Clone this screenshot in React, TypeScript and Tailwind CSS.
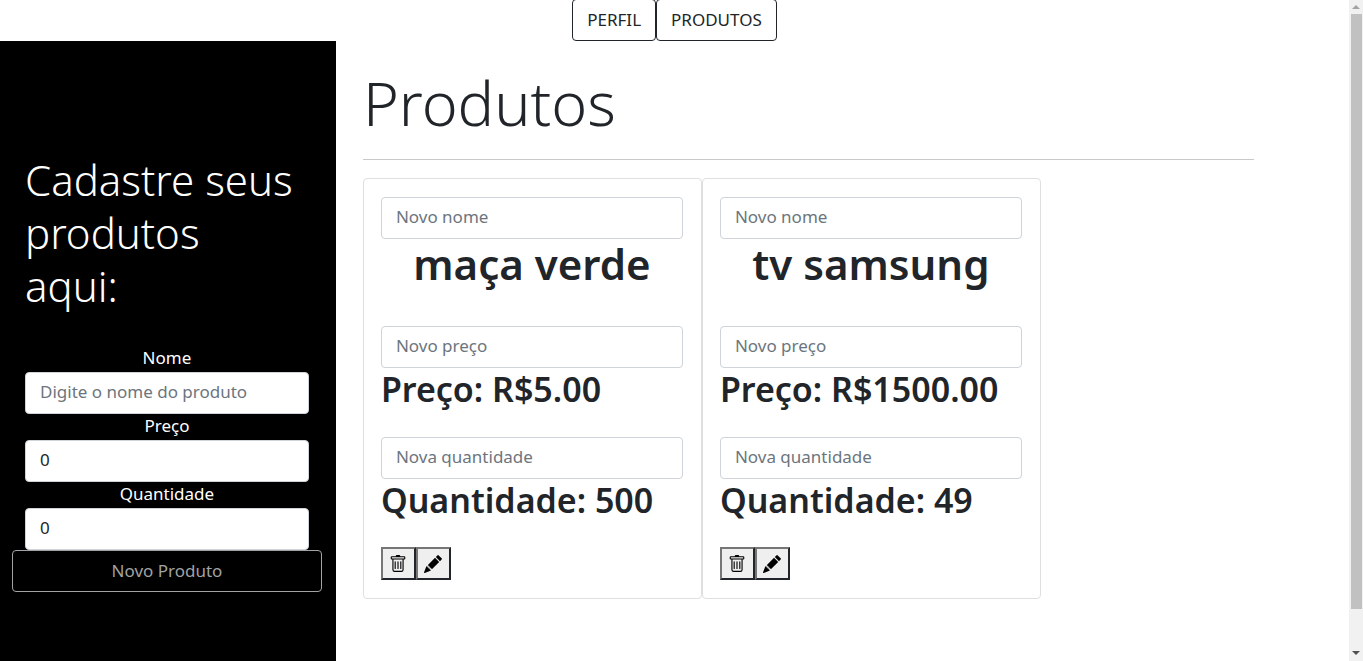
import { useState } from "react";
import { BsTrash, BsPencilFill } from "react-icons/bs";

type Product = { id: number; name: string; price: string; quantity: number };

const products: Product[] = [
  { id: 1, name: "maça verde", price: "5.00", quantity: 500 },
  { id: 2, name: "tv samsung", price: "1500.00", quantity: 49 },
];

const inputClass =
  "block h-[42px] w-full rounded-[4px] border border-[#ced4da] bg-white px-[14px] pb-[3px] text-[17px] text-[#212529] placeholder:text-[#6c757d] placeholder:opacity-100";

const iconButtonClass =
  "flex h-[33px] w-[35px] items-center justify-center border-2 border-t-[#767676] border-l-[#767676] border-r-[#212529] border-b-[#212529] bg-[#efefef] text-black";

function Header() {
  const tab =
    "h-[42px] rounded-[4px] border border-[#212529] px-[14px] text-[17px] text-[#212529]";
  return (
    <nav className="-mt-px flex justify-center">
      <button type="button" className={tab}>PERFIL</button>
      <button type="button" className={tab}>PRODUTOS</button>
    </nav>
  );
}

function Field(props: { id: string; label: string; type: string; placeholder?: string; initial: string }) {
  const [value, setValue] = useState(props.initial);
  return (
    <div>
      <label htmlFor={props.id} className="block pb-0.5 text-center text-[17px] leading-6">
        {props.label}
      </label>
      <input
        id={props.id}
        type={props.type}
        placeholder={props.placeholder}
        value={value}
        onChange={(e) => setValue(e.target.value)}
        className={inputClass}
      />
    </div>
  );
}

function Sidebar() {
  return (
    <aside className="flex w-[24.9%] shrink-0 flex-col justify-center bg-black pt-[43px] pr-[14px] pl-3 text-white">
      <form onSubmit={(e) => e.preventDefault()}>
        <div className="px-[13px]">
          <h2 className="mb-[34px] pr-2 text-[42px] leading-[53px] font-light">
            Cadastre seus produtos aqui:
          </h2>
          <Field id="nome" label="Nome" type="text" placeholder="Digite o nome do produto" initial="" />
          <Field id="preco" label="Preço" type="number" initial="0" />
          <Field id="quantidade" label="Quantidade" type="number" initial="0" />
        </div>
        <button
          type="submit"
          disabled
          className="h-[42px] w-full rounded-[4px] border border-[#a1a3a4] text-[17px] text-[#a1a3a4]"
        >
          Novo Produto
        </button>
      </form>
    </aside>
  );
}

function ProductCard({ product }: { product: Product }) {
  return (
    <article className="w-[339px] rounded-[4px] border border-[#dfdfdf] py-[18px] pr-[18px] pl-[17px]">
      <input aria-label="Novo nome" placeholder="Novo nome" className={inputClass} />
      <h2 className="mb-[38px] text-center text-[42px] leading-[49px] font-semibold">{product.name}</h2>
      <input aria-label="Novo preço" placeholder="Novo preço" className={inputClass} />
      <h3 className="mb-[27px] text-[34px] leading-[42px] font-semibold whitespace-nowrap">
        Preço: R${product.price}
      </h3>
      <input aria-label="Nova quantidade" placeholder="Nova quantidade" className={inputClass} />
      <h3 className="mb-[26px] text-[34px] leading-[42px] font-semibold whitespace-nowrap">
        Quantidade: {product.quantity}
      </h3>
      <div className="flex">
        <button type="button" aria-label="Excluir" className={iconButtonClass}>
          <BsTrash size={18} />
        </button>
        <button type="button" aria-label="Editar" className={iconButtonClass}>
          <BsPencilFill size={18} />
        </button>
      </div>
    </article>
  );
}

function Scrollbar() {
  return (
    <div aria-hidden="true" className="sticky top-0 flex h-screen w-[14px] shrink-0 flex-col items-center bg-[#f1f1f1]">
      <svg width="14" height="14" viewBox="0 0 14 14" fill="#a3a3a3">
        <path d="M7 5 L11 9 H3 Z" />
      </svg>
      <div className="w-[11px] grow bg-[#c1c1c1]" />
      <svg width="14" height="52" viewBox="0 0 14 52" fill="#505050">
        <path d="M3 42 H11 L7 46 Z" />
      </svg>
    </div>
  );
}

export default function App() {
  return (
    <div className="flex bg-white font-['Noto_Sans','Open_Sans',sans-serif] text-[#212529]">
      <div className="flex min-h-screen min-w-0 grow flex-col">
        <Header />
        <div className="flex grow">
          <Sidebar />
          <main className="min-w-0 grow pt-5 pr-[95px] pb-[62px] pl-[27px]">
            <h1 className="text-[61px] leading-[84px] font-light">Produtos</h1>
            <hr className="mt-[14px] mb-[18px] border-[#c8c9ca]" />
            <div className="flex flex-wrap">
              {products.map((product) => (
                <ProductCard key={product.id} product={product} />
              ))}
            </div>
          </main>
        </div>
      </div>
      <Scrollbar />
    </div>
  );
}
